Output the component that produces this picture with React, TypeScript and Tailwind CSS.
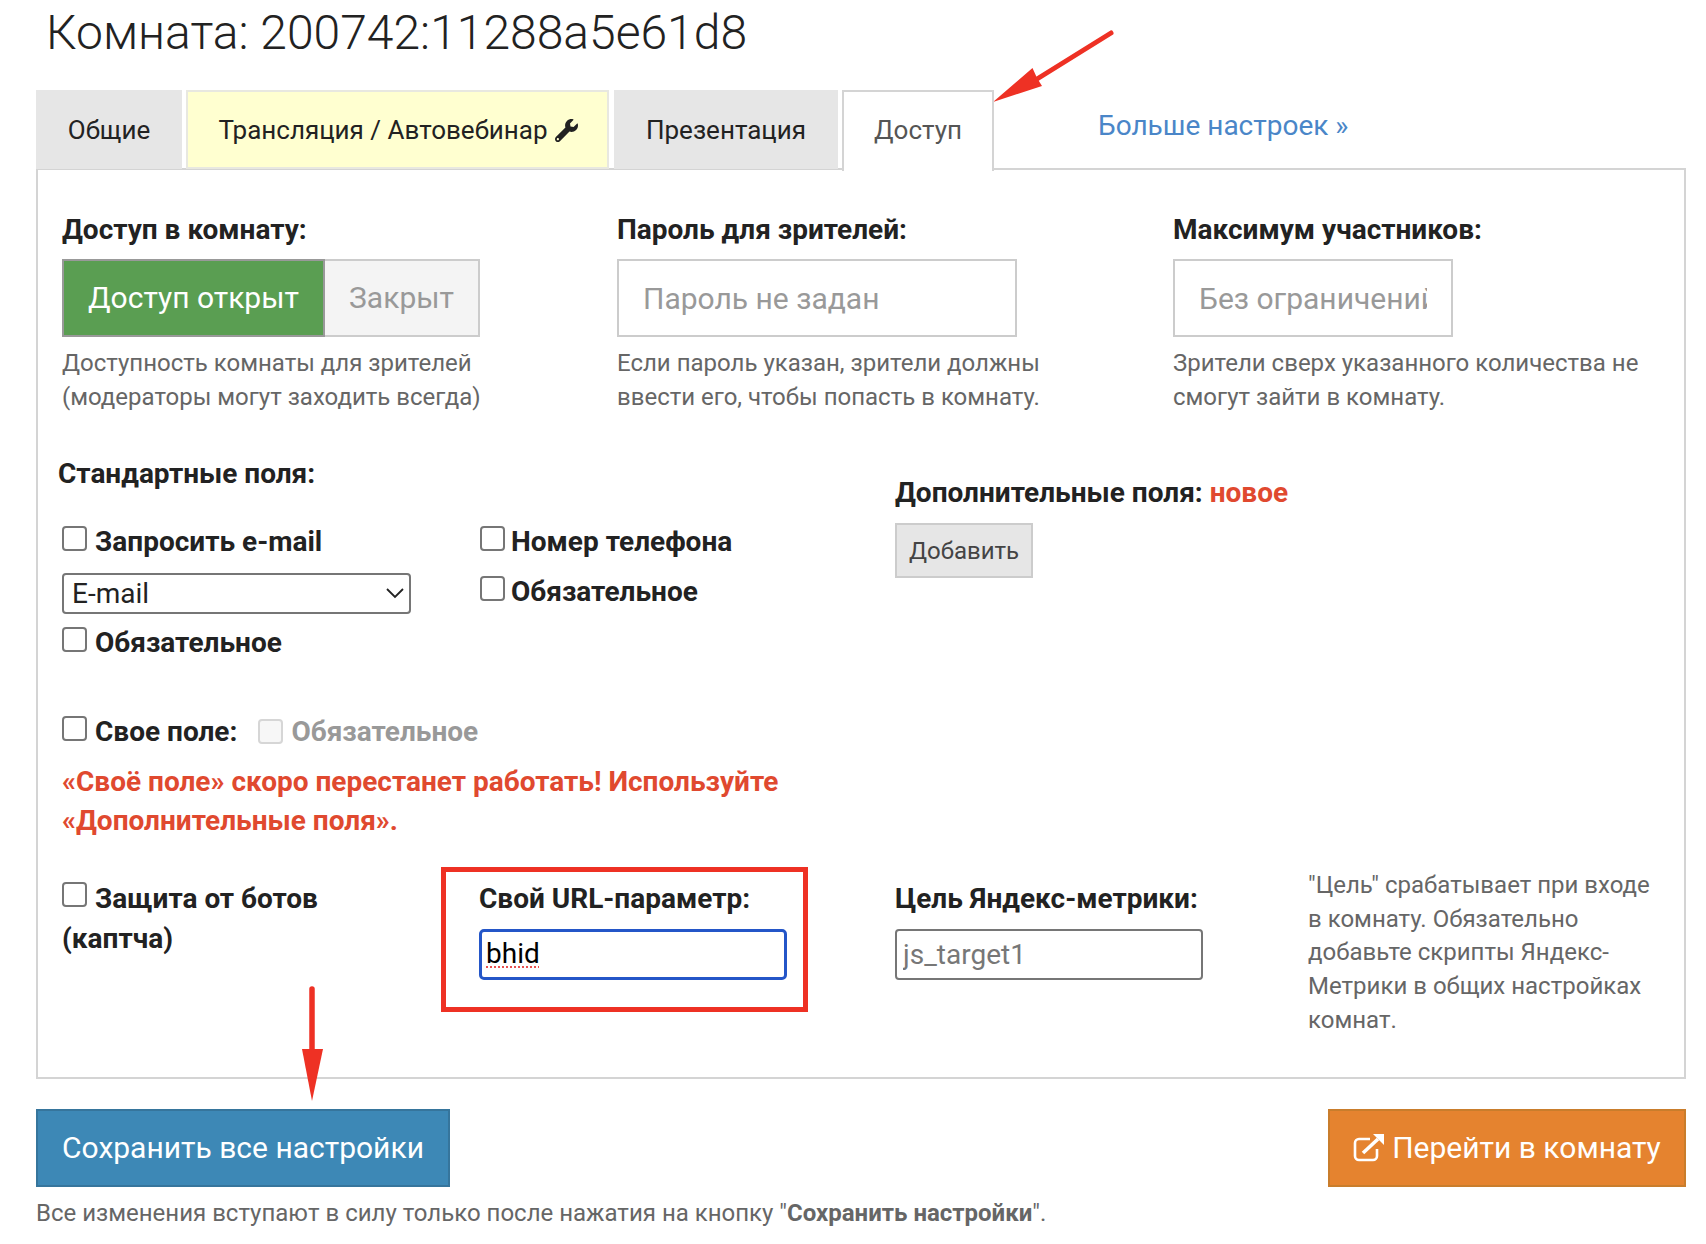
import React from "react";
import { FaWrench } from "react-icons/fa";

const Cb = ({ disabled = false }: { disabled?: boolean }) => (
  <input
    type="checkbox"
    disabled={disabled}
    className={
      disabled
        ? "appearance-none w-[25px] h-[25px] mt-[2px] rounded-[4px] border-2 border-[#d6d6d6] bg-[#f7f7f7] shrink-0"
        : "appearance-none w-[25px] h-[25px] mt-[2px] rounded-[4px] border-2 border-[#767676] bg-white shrink-0"
    }
  />
);

export default function App() {
  return (
    <div className="relative w-[1706px] h-[1244px] bg-white text-[#222] overflow-hidden font-['Roboto',sans-serif]">
      <h1 className="pl-[46px] h-[90px] pt-[3px] text-[48px] leading-[60px] font-light text-[#222]">
        Комната: 200742:11288a5e61d8
      </h1>

      <div className="ml-[36px] w-[1650px] h-[79px] flex gap-[5px] text-[26px]">
        <div className="w-[146px] h-[79px] bg-[#e6e6e6] flex items-center justify-center pt-[2px]">Общие</div>
        <div className="-ml-[1px] w-[423px] h-[79px] bg-[#ffffd0] border-2 border-[#e8e8e0] flex items-center justify-center gap-[7px] pt-[2px] pl-[1px]">
          Трансляция / Автовебинар <FaWrench className="text-[23px]" />
        </div>
        <div className="w-[224px] h-[79px] bg-[#e6e6e6] flex items-center justify-center pt-[2px]">Презентация</div>
        <div className="relative z-10 -ml-[1px] w-[152px] h-[81px] bg-white border-2 border-b-0 border-[#d4d4d4] flex items-center justify-center text-[#555] pb-[3px]">Доступ</div>
        <a className="ml-[99px] mt-[16px] text-[#4a86c8] text-[28px] leading-[40px]">Больше настроек »</a>
      </div>

      <div className="ml-[36px] w-[1650px] h-[911px] border-2 border-[#d4d4d4] -mt-[1px] pt-[42px]">
        <div className="flex pl-[24px]">
          <div className="w-[555px]">
            <div className="text-[28px] font-bold leading-[36px]">Доступ в комнату:</div>
            <div className="flex h-[78px] w-[418px] mt-[11px]">
              <div className="w-[263px] bg-[#5a9e52] border-2 border-[#999] flex items-center justify-center text-white text-[30px] pb-[2px]">Доступ открыт</div>
              <div className="flex-1 bg-[#f4f4f4] border-2 border-l-0 border-[#ccc] flex items-center justify-center text-[#999] text-[30px] pb-[2px]">Закрыт</div>
            </div>
            <p className="mt-[9px] text-[24px] leading-[34px] text-[#666]">Доступность комнаты для зрителей<br />(модераторы могут заходить всегда)</p>
          </div>
          <div className="w-[556px]">
            <div className="text-[28px] font-bold leading-[36px]">Пароль для зрителей:</div>
            <input placeholder="Пароль не задан" className="block mt-[11px] w-[400px] h-[78px] border-2 border-[#ccc] px-[24px] text-[30px] placeholder:text-[#999] outline-none" />
            <p className="mt-[9px] text-[24px] leading-[34px] text-[#666]">Если пароль указан, зрители должны<br />ввести его, чтобы попасть в комнату.</p>
          </div>
          <div>
            <div className="text-[28px] font-bold leading-[36px]">Максимум участников:</div>
            <input placeholder="Без ограничений" className="block mt-[11px] w-[280px] h-[78px] border-2 border-[#ccc] px-[24px] text-[30px] placeholder:text-[#999] outline-none" />
            <p className="mt-[9px] text-[24px] leading-[34px] text-[#666]">Зрители сверх указанного количества не<br />смогут зайти в комнату.</p>
          </div>
        </div>

        <div className="flex mt-[42px]">
          <div className="w-[857px] pl-[20px]">
            <div className="text-[28px] font-bold leading-[36px]">Стандартные поля:</div>
            <div className="flex pl-[4px] mt-[32px] text-[28px] font-bold">
              <div className="w-[418px]">
                <label className="flex items-start gap-[8px] h-[46px]"><Cb /><span className="leading-[36px]">Запросить e-mail</span></label>
                <div className="flex items-center justify-between w-[349px] h-[41px] mt-[3px] border-2 border-[#767676] rounded-[4px] bg-white pl-[8px] pr-[5px] text-[28px] leading-[35px] font-normal text-[#222]">
                  E-mail
                  <svg width="18" height="11" viewBox="0 0 18 11" fill="none" stroke="#222" strokeWidth="1.8"><path d="M1 1l8 8 8-8" /></svg>
                </div>
                <label className="flex items-start gap-[8px] h-[46px] mt-[11px]"><Cb /><span className="leading-[36px]">Обязательное</span></label>
              </div>
              <div>
                <label className="flex items-start gap-[6px] h-[50px]"><Cb /><span className="leading-[36px]">Номер телефона</span></label>
                <label className="flex items-start gap-[6px] h-[46px]"><Cb /><span className="leading-[36px]">Обязательное</span></label>
              </div>
            </div>
            <div className="flex items-start pl-[4px] mt-[43px] text-[28px] font-bold h-[48px]">
              <Cb /><span className="ml-[8px] leading-[36px]">Свое поле:</span>
              <span className="ml-[21px]"><Cb disabled /></span><span className="ml-[8px] leading-[36px] text-[#999]">Обязательное</span>
            </div>
            <p className="pl-[4px] text-[28px] leading-[39px] font-bold text-[#e0492f]">«Своё поле» скоро перестанет работать! Используйте<br />«Дополнительные поля».</p>
          </div>
          <div className="pt-[19px]">
            <div className="text-[28px] font-bold leading-[36px]">Дополнительные поля: <span className="text-[#e0492f]">новое</span></div>
            <button className="mt-[12px] w-[138px] h-[55px] bg-[#e6e6e6] border-2 border-[#ccc] text-[24px] text-[#444]">Добавить</button>
          </div>
        </div>

        <div className="flex mt-[27px]">
          <div className="w-[403px] pl-[24px] pt-[11px] text-[28px] font-bold leading-[40px]">
            <label className="block"><span className="inline-block align-[1px] mr-[8px] w-[25px] h-[25px]"><Cb /></span>Защита от ботов<br />(каптча)</label>
          </div>
          <div className="w-[367px] h-[145px] border-[5px] border-[#ee3124] pl-[33px] pt-[9px]">
            <div className="text-[28px] font-bold leading-[36px]">Свой URL-параметр:</div>
            <div className="mt-[12px] w-[308px] h-[51px] border-[3px] border-[#2456c8] rounded-[5px] pl-[4px] text-[28px] leading-[44px] text-black"><span className="underline decoration-dotted decoration-[#e85050] decoration-2 underline-offset-[3px]">bhid</span></div>
          </div>
          <div className="ml-[87px] w-[308px] pt-[14px]">
            <div className="text-[28px] font-bold leading-[36px] whitespace-nowrap">Цель Яндекс-метрики:</div>
            <input placeholder="js_target1" className="block mt-[12px] w-[308px] h-[51px] border-2 border-[#767676] rounded-[4px] px-[6px] text-[28px] placeholder:text-[#777] outline-none" />
          </div>
          <p className="ml-[105px] mt-[2px] w-[350px] text-[24px] leading-[33.7px] text-[#666]">"Цель" срабатывает при входе в комнату. Обязательно добавьте скрипты Яндекс-Метрики в общих настройках комнат.</p>
        </div>
      </div>

      <div className="ml-[36px] w-[1650px] flex justify-between mt-[30px]">
        <button className="w-[414px] h-[78px] bg-[#3d88b6] border-2 border-[#36759c] text-white text-[30px] pb-[2px]">Сохранить все настройки</button>
        <button className="w-[358px] h-[78px] bg-[#e5832f] border-2 border-[#c97d2c] text-white text-[30px] flex items-center justify-center gap-[7px] pb-[2px]">
          <svg width="32" height="29" viewBox="0 0 32 29" fill="none" stroke="white" strokeWidth="2.6"><path d="M17 6H6a4 4 0 0 0-4 4v13a4 4 0 0 0 4 4h14a4 4 0 0 0 4-4v-7" /><path d="M10 20 25 6" strokeWidth="3.6" /><path d="M20 1H31V12Z" fill="white" stroke="none" /></svg>
          Перейти в комнату
        </button>
      </div>
      <p className="ml-[36px] mt-[9px] text-[24px] leading-[34px] text-[#666]">Все изменения вступают в силу только после нажатия на кнопку "<b>Сохранить настройки</b>".</p>

      <svg className="absolute left-[985px] top-[25px]" width="135" height="85" viewBox="0 0 135 85">
        <path d="M126 8 52 54" stroke="#ee3124" strokeWidth="5" strokeLinecap="round" />
        <path d="M8 77 47.5 43 52 53 57 61Z" fill="#ee3124" />
      </svg>
      <svg className="absolute left-[296px] top-[985px]" width="32" height="118" viewBox="0 0 32 118">
        <path d="M16 4V66" stroke="#ee3124" strokeWidth="5.5" strokeLinecap="round" />
        <path d="M6 64H27L16 116Z" fill="#ee3124" />
      </svg>
    </div>
  );
}
